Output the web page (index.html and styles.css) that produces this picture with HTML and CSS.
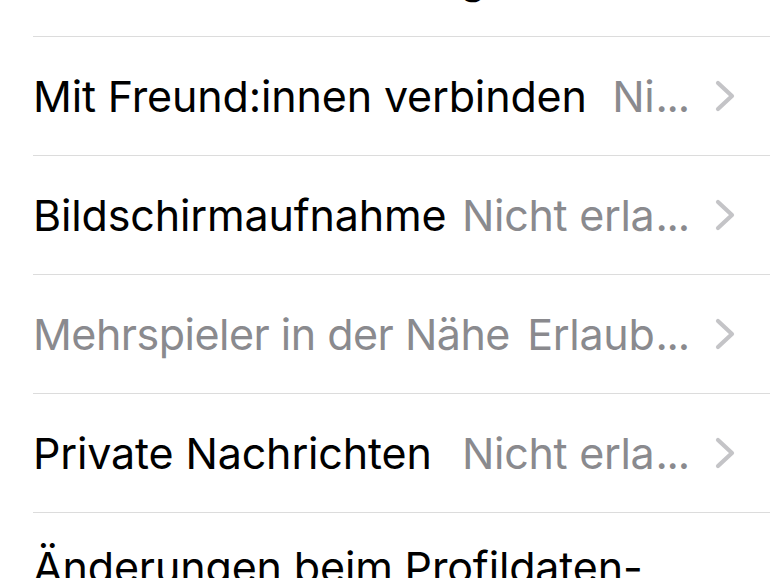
FILE: index.html
```html
<!DOCTYPE html>
<html lang="de">
<head>
<meta charset="utf-8">
<link rel="stylesheet" href="styles.css">
</head>
<body>
<div class="list">
  <div class="row">
    <span class="label">Freund:innen hinzufügen</span>
    <span class="value">Erlaub<span class="ell">...</span></span>
    <svg class="chev" viewBox="0 0 20 32"><path d="M3 3 L17 16 L3 29"/></svg>
  </div>
  <div class="row">
    <span class="label">Mit Freund:innen verbinden</span>
    <span class="value">Ni<span class="ell">...</span></span>
    <svg class="chev" viewBox="0 0 20 32"><path d="M3 3 L17 16 L3 29"/></svg>
  </div>
  <div class="row">
    <span class="label">Bildschirmaufnahme</span>
    <span class="value">Nicht erla<span class="ell">...</span></span>
    <svg class="chev" viewBox="0 0 20 32"><path d="M3 3 L17 16 L3 29"/></svg>
  </div>
  <div class="row disabled">
    <span class="label">Mehrspieler in der Nähe</span>
    <span class="value">Erlaub<span class="ell">...</span></span>
    <svg class="chev" viewBox="0 0 20 32"><path d="M3 3 L17 16 L3 29"/></svg>
  </div>
  <div class="row">
    <span class="label">Private Nachrichten</span>
    <span class="value">Nicht erla<span class="ell">...</span></span>
    <svg class="chev" viewBox="0 0 20 32"><path d="M3 3 L17 16 L3 29"/></svg>
  </div>
  <div class="row multi">
    <span class="label">Änderungen beim Profildaten-<br>schutz</span>
    <span class="value">Erlaub<span class="ell">...</span></span>
    <svg class="chev" viewBox="0 0 20 32"><path d="M3 3 L17 16 L3 29"/></svg>
  </div>
</div>
</body>
</html>
```

FILE: styles.css
```css
html, body {
  margin: 0;
  padding: 0;
  background: #ffffff;
  overflow: hidden;
}
body {
  width: 770px;
  height: 578px;
  font-family: Inter, "Liberation Sans", sans-serif;
  font-size: 43px;
  -webkit-font-smoothing: antialiased;
}
.list {
  margin-top: -82px;
  padding-left: 33px;
}
.row {
  display: flex;
  align-items: center;
  height: 118px;
  border-bottom: 1px solid #dcdcdc;
  padding-right: 35px;
  white-space: nowrap;
}
.label {
  color: #000000;
  letter-spacing: -0.15px;
  min-width: 0;
  flex: 0 1 auto;
}
.value {
  margin-left: auto;
  padding-left: 16px;
  color: #8a8a8e;
  letter-spacing: -0.3px;
  flex: none;
}
.ell {
  letter-spacing: -1.2px;
  padding-left: 1px;
}
.disabled .label {
  color: #8a8a8e;
  letter-spacing: -0.5px;
}
.chev {
  width: 20px;
  height: 32px;
  margin-left: 26px;
  flex: none;
}
.chev path {
  fill: none;
  stroke: #c4c4c7;
  stroke-width: 4.2;
  stroke-linecap: round;
  stroke-linejoin: round;
}
.multi {
  height: auto;
  flex-wrap: wrap;
  padding-top: 28px;
  padding-bottom: 30px;
  line-height: 52px;
}
.multi .label {
  flex: 0 0 100%;
}
```
